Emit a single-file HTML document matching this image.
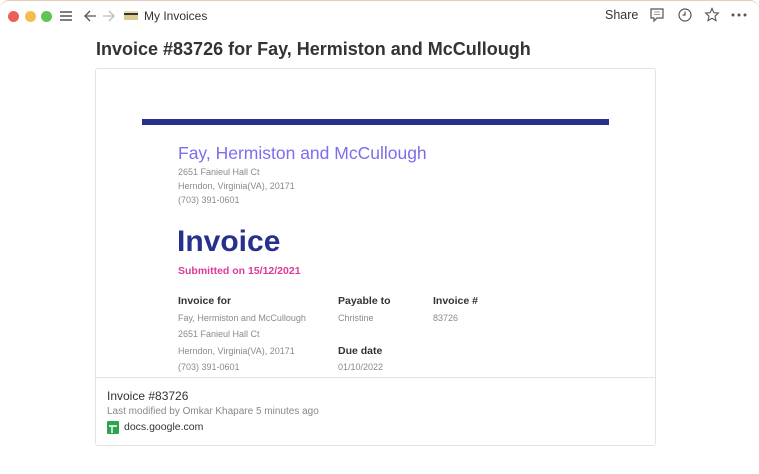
<!DOCTYPE html>
<html><head><style>
*{margin:0;padding:0;box-sizing:border-box}
body{width:759px;height:474px;background:#fff;font-family:"Liberation Sans",sans-serif;position:relative;overflow:hidden}
.win{position:absolute;left:0;top:0;width:759px;height:20px;border-top:1px solid #e8cbb8;border-radius:9px 9px 0 0}
.t{position:absolute;white-space:nowrap}
.dot{position:absolute;top:11px;width:11px;height:11px;border-radius:50%}
.card{position:absolute;left:95px;top:68px;width:561px;height:378px;border:1px solid #e3e3e3;border-radius:3px}
.g{color:#8a8a8a;font-size:9px}
.h{color:#333;font-size:10.5px;font-weight:bold}
</style></head><body>
<div class="win"></div>
<div class="dot" style="left:8px;background:#ec5f57"></div>
<div class="dot" style="left:25px;background:#f4bd4f"></div>
<div class="dot" style="left:41px;background:#60c453"></div>
<svg style="position:absolute;left:59px;top:9px" width="14" height="14"><path d="M1 3h12M1 7h12M1 11h12" stroke="#555" stroke-width="1.4"/></svg>
<svg style="position:absolute;left:83px;top:9px" width="14" height="14"><path d="M13 7H2M7 2L2 7l5 5" stroke="#555" stroke-width="1.3" fill="none"/></svg>
<svg style="position:absolute;left:102px;top:9px" width="14" height="14"><path d="M1 7h11M7 2l5 5-5 5" stroke="#bbb" stroke-width="1.3" fill="none"/></svg>
<div style="position:absolute;left:124px;top:11px;width:14px;height:9px;background:linear-gradient(#e7dcae 0 25%,#333 25% 45%,#d8cc92 45%);border-radius:1px"></div>
<div class="t" style="left:144px;top:9px;font-size:12px;color:#333">My Invoices</div>
<div class="t" style="left:605px;top:8px;font-size:12.5px;color:#333">Share</div>
<svg style="position:absolute;left:649px;top:7px" width="16" height="16"><path d="M2 2h12v9H8l-3 3v-3H2z" stroke="#555" stroke-width="1.2" fill="none"/><path d="M5 5h6M5 7.5h6" stroke="#999" stroke-width="1"/></svg>
<svg style="position:absolute;left:677px;top:7px" width="16" height="16"><circle cx="8" cy="8" r="6" stroke="#555" stroke-width="1.2" fill="none"/><path d="M8 4.5V8H5.5" stroke="#555" stroke-width="1.2" fill="none"/></svg>
<svg style="position:absolute;left:704px;top:7px" width="16" height="16"><path d="M8 1.5l1.9 4.2 4.5.4-3.4 3 1 4.5L8 11.3 4 13.6l1-4.5-3.4-3 4.5-.4z" stroke="#555" stroke-width="1.1" fill="none"/></svg>
<svg style="position:absolute;left:731px;top:13px" width="16" height="4"><circle cx="2" cy="2" r="1.5" fill="#555"/><circle cx="8" cy="2" r="1.5" fill="#555"/><circle cx="14" cy="2" r="1.5" fill="#555"/></svg>
<div class="t" style="left:96px;top:39px;font-size:18px;font-weight:bold;color:#333">Invoice #83726 for Fay, Hermiston and McCullough</div>
<div class="card">
<div style="position:absolute;left:46px;top:50px;width:467px;height:6px;background:#27308a"></div>
<div class="t" style="left:82px;top:74px;font-size:17.5px;color:#7b6ef0">Fay, Hermiston and McCullough</div>
<div class="t g" style="left:82px;top:98px">2651 Fanieul Hall Ct</div>
<div class="t g" style="left:82px;top:112px">Herndon, Virginia(VA), 20171</div>
<div class="t g" style="left:82px;top:126px">(703) 391-0601</div>
<div class="t" style="left:81px;top:156px;font-size:30px;font-weight:bold;color:#27308a">Invoice</div>
<div class="t" style="left:82px;top:196px;font-size:10.5px;font-weight:bold;color:#e0389a">Submitted on 15/12/2021</div>
<div class="t h" style="left:82px;top:226px">Invoice for</div>
<div class="t h" style="left:242px;top:226px">Payable to</div>
<div class="t h" style="left:337px;top:226px">Invoice #</div>
<div class="t g" style="left:82px;top:244px">Fay, Hermiston and McCullough</div>
<div class="t g" style="left:242px;top:244px">Christine</div>
<div class="t g" style="left:337px;top:244px">83726</div>
<div class="t g" style="left:82px;top:260px">2651 Fanieul Hall Ct</div>
<div class="t g" style="left:82px;top:277px">Herndon, Virginia(VA), 20171</div>
<div class="t h" style="left:242px;top:276px">Due date</div>
<div class="t g" style="left:82px;top:293px">(703) 391-0601</div>
<div class="t g" style="left:242px;top:293px">01/10/2022</div>
<div style="position:absolute;left:0;top:308px;width:559px;height:1px;background:#e3e3e3"></div>
<div class="t" style="left:11px;top:320px;font-size:12px;color:#333">Invoice #83726</div>
<div class="t" style="left:11px;top:337px;font-size:10px;color:#888">Last modified by Omkar Khapare 5 minutes ago</div>
<svg style="position:absolute;left:11px;top:352px" width="12" height="13"><rect width="12" height="13" rx="1" fill="#2da44e"/><path d="M2 5h8M5 5v7" stroke="#fff" stroke-width="1.4"/></svg>
<div class="t" style="left:28px;top:352px;font-size:10.5px;color:#333">docs.google.com</div>
</div>
</body></html>
